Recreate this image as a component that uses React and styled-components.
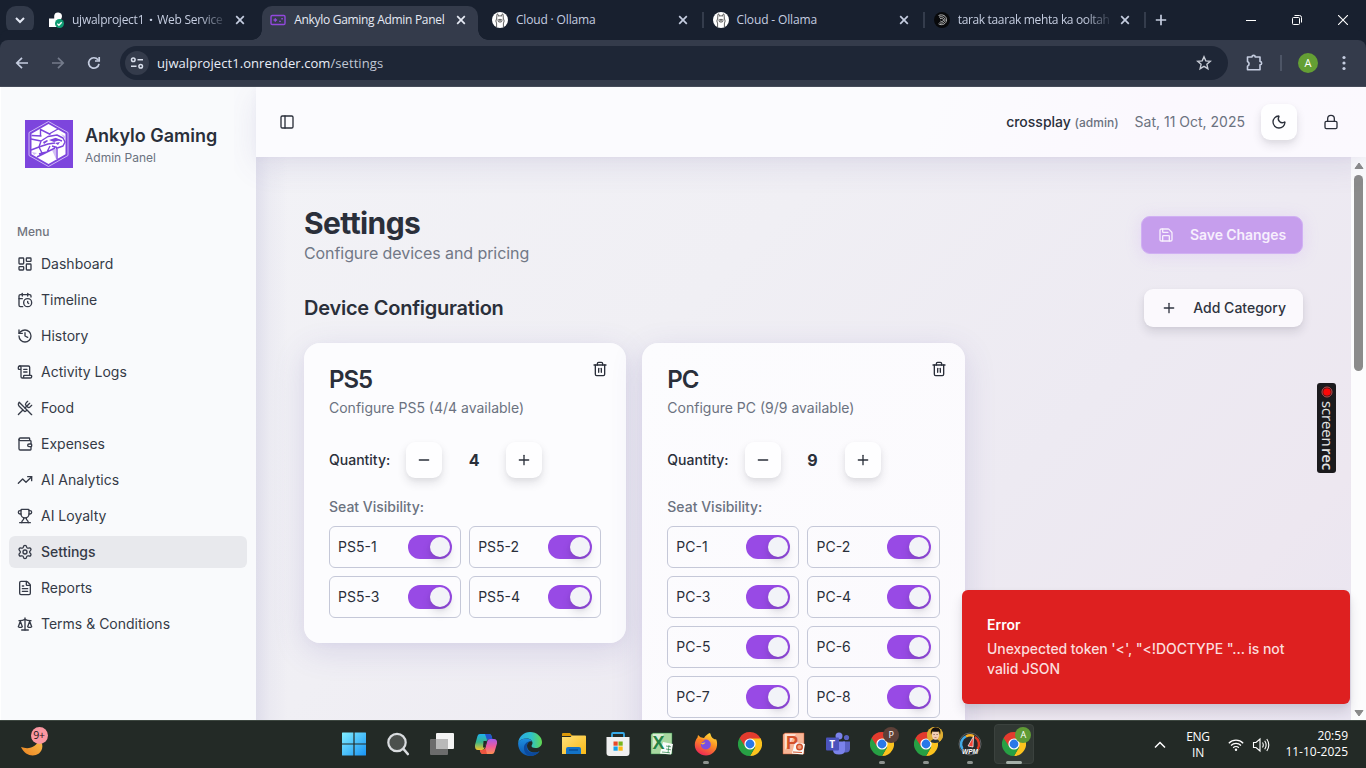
import React from "react";
import styled, { createGlobalStyle, css } from "styled-components";
import {
  PanelLeft, Moon, Lock, LayoutDashboard, CalendarClock, History, ScrollText,
  UtensilsCrossed, Wallet, TrendingUp, Trophy, Settings, FileText, Scale, Save,
  Plus, Minus, Trash2,
} from "lucide-react";

const Global = createGlobalStyle`
  *, *::before, *::after { box-sizing: border-box; }
  body { margin: 0; overflow: hidden; font-family: Inter, sans-serif; color: #2a2f3a; }
  h1, h2, h3, p { margin: 0; }
  button { font: inherit; color: inherit; border: 0; padding: 0; background: none; }
  svg { display: block; flex: none; }
`;

const ui = css`font-family: "Open Sans", "Noto Sans", sans-serif;`;

const Screen = styled.div`
  width: 1366px; height: 768px; display: flex; flex-direction: column;
  position: relative; overflow: hidden;
`;

/* ---------- browser frame ---------- */
const TabStrip = styled.div`
  ${ui} height: 40px; flex: none; display: flex; background: #18202f; color: #c5cde0; font-size: 12px;
`;
const TabSearch = styled.div`
  width: 28px; height: 28px; margin: 6px 6px 0; border-radius: 10px; background: #323a4a;
  display: flex; align-items: center; justify-content: center;
`;
const Tab = styled.div`
  width: 221.2px; height: 40px; flex: none; display: flex; align-items: center; gap: 8px;
  padding: 0 13px 0 ${p => p.$pad || 9}px; position: relative; isolation: isolate; color: ${p => (p.$active ? "#e6eaf4" : "#c5cde0")};
  ${p => p.$active && css`
    &::before { content: ""; position: absolute; z-index: -1; left: 1px; right: 4px; top: 6px; bottom: 0;
      background: #343b4b; border-radius: 10px 10px 0 0; }
    &::after { content: ""; position: absolute; z-index: -1; left: -9px; right: -6px; bottom: 0; height: 10px;
      background:
        radial-gradient(circle at 0 0, transparent 9.5px, #343b4b 10px) left / 10px 10px no-repeat,
        radial-gradient(circle at 100% 0, transparent 9.5px, #343b4b 10px) right / 10px 10px no-repeat; }
  `}
`;
const TabTitle = styled.div`
  flex: 1; min-width: 0; white-space: nowrap; letter-spacing: ${p => p.$ls || "-0.15px"}; line-height: 18px;
  ${p => p.$fade && css`mask-image: linear-gradient(90deg, #000 84%, rgba(0, 0, 0, 0.15) 100%);`}
`;
const TabDot = styled.span`font-weight: 800; padding: 0 2px;`;
const TabLine = styled.div`
  position: absolute; right: 0; top: 12px; width: 2px; height: 16px; background: #343c4c;
`;
const NewTab = styled.div`width: 30px; display: flex; align-items: center; justify-content: center;`;
const WindowButtons = styled.div`margin-left: auto; display: flex;`;
const WindowButton = styled.div`width: 46px; height: 40px; display: flex; align-items: center; justify-content: center;`;

const Toolbar = styled.div`
  ${ui} height: 47px; flex: none; background: #343b4b; border-radius: 8px 8px 0 0; border-bottom: 1px solid #454b59;
  display: flex; align-items: center; padding: 0 4px;
  box-shadow: 0 -10px 0 0 #18202f;
`;
const ToolSlot = styled.div`
  width: ${p => p.$w || 36}px; height: 36px; flex: none; display: flex; align-items: center; justify-content: center;
`;
const Omnibox = styled.div`
  width: 1108px; height: 34px; flex: none; margin-left: 8px; border-radius: 17px; background: #1e2636;
  display: flex; align-items: center; padding: 0 12px 0 5px; color: #e9edf6;
  font-size: 13px; letter-spacing: 0.07px;
`;
const SiteInfo = styled.div`
  width: 24px; height: 24px; border-radius: 12px; background: #343b4b; margin-right: 8px;
  display: flex; align-items: center; justify-content: center;
`;
const UrlText = styled.div`flex: 1; white-space: nowrap;`;
const UrlPath = styled.span`color: #c0c6d4;`;
const ToolLine = styled.div`width: 2px; height: 16px; flex: none; background: #4d5566;`;
const Avatar = styled.div`
  ${ui} width: 20px; height: 20px; border-radius: 50%; background: #649f34; color: #fff; font-size: 11px; line-height: 20px;
  text-align: center;
`;

/* ---------- page ---------- */
const Page = styled.div`height: 633px; flex: none; display: flex; background: #f1f0f5; overflow: hidden; line-height: 20px;`;
const Sidebar = styled.aside`
  width: 256px; flex: none; background: #f9fafc; border-left: 1px solid #fff; padding: 8px 9px 0 8px;
  display: flex; flex-direction: column;
`;
const Brand = styled.div`display: flex; align-items: center; gap: 12px; padding: 25px 16px 0;`;
const BrandName = styled.div`font-size: 18px; line-height: 28px; font-weight: 600; color: #2a2f3a; white-space: nowrap;`;
const BrandSub = styled.div`font-size: 12px; line-height: 16px; color: #6b7280;`;
const MenuLabel = styled.div`
  margin-top: 47px; height: 32px; padding: 1px 8px 0; display: flex; align-items: center;
  font-size: 12px; line-height: 17px; font-weight: 500; color: #71747e;
`;
const Menu = styled.nav`display: flex; flex-direction: column; gap: 4px; margin-top: 1px;`;
const MenuItem = styled.div`
  height: 32px; border-radius: 6px; padding: 0 8px; display: flex; align-items: center; gap: 8px;
  font-size: 14px; color: #353a47; font-weight: ${p => (p.$active ? 500 : 400)};
  background: ${p => (p.$active ? "#e8e9ed" : "transparent")};
`;

const Main = styled.div`flex: 1; min-width: 0; display: flex; flex-direction: column;`;
const Header = styled.header`
  height: 70px; flex: none; display: flex; align-items: center; padding: 0 17px; gap: 16px; position: relative;
  background: linear-gradient(115deg, #fbfbfe 0%, #fbfbfe 60%, #fbf8fe 80%, #fbf9fe 100%);
  box-shadow: 0 8px 32px rgba(90, 80, 160, 0.12), 0 2px 8px rgba(90, 80, 160, 0.04);
  clip-path: inset(0 0 -60px -22px);
`;
const PanelButton = styled.button`width: 28px; height: 28px; display: grid; place-items: center; margin-right: auto;`;
const UserName = styled.div`font-size: 14px; font-weight: 500; color: #2a2f3a;`;
const UserRole = styled.span`font-size: 12px; color: #6b7280;`;
const DateText = styled.div`font-size: 14px; color: #6b7280;`;
const IconButton = styled.button`
  width: 36px; height: 36px; flex: none; border-radius: 9px; display: grid; place-items: center; color: #2a2f3a;
  ${p => p.$raised && css`background: #fefeff; box-shadow: 0 5px 10px rgba(40, 40, 60, 0.12), 0 2px 4px rgba(40, 40, 60, 0.04);`}
`;
const Body = styled.div`flex: 1; min-height: 0; display: flex;`;
const Content = styled.main`
  width: 1095px; height: 563px; overflow: hidden; padding: 48px; flex: none;
  background:
    linear-gradient(90deg, rgba(190, 188, 216, 0.34) 0, rgba(200, 198, 222, 0.14) 14px, transparent 32px),
    linear-gradient(135deg, #f2f2f6 0%, #f0eff4 35%, #edeaf2 65%, #ede7f0 85%, #e9e5f1 100%);
`;
const Row = styled.div`display: flex; align-items: center; justify-content: space-between;`;
const Title = styled.h1`font-size: 30px; line-height: 36px; font-weight: 700; letter-spacing: -0.6px;`;
const Subtitle = styled.p`font-size: 16px; line-height: 24px; color: #717886; letter-spacing: -0.08px;`;
const SectionRow = styled(Row)`margin-top: 24px;`;
const SectionTitle = styled.h2`font-size: 20px; line-height: 28px; font-weight: 600; letter-spacing: -0.24px;`;
const SaveButton = styled.button`
  height: 38px; padding: 0 16px; border: 1px solid #d0b0f3; border-radius: 9px; background: #c69eed; color: #f7effd;
  display: flex; align-items: center; gap: 16px; font-size: 14px; font-weight: 600; letter-spacing: -0.08px;
  box-shadow: 0 2px 16px rgba(190, 140, 245, 0.22); white-space: nowrap;
`;
const AddButton = styled.button`
  height: 38px; padding: 0 17px; border-radius: 9px; background: #fbf9fd; color: #2f3440;
  display: flex; align-items: center; gap: 16px; font-size: 14px; font-weight: 500;
  box-shadow: 0 5px 10px rgba(40, 40, 60, 0.13), 0 1px 3px rgba(40, 40, 60, 0.04); white-space: nowrap;
`;
const Cards = styled.div`display: grid; grid-template-columns: repeat(3, 1fr); gap: 16px; align-items: start; margin-top: 16px;`;
const Card = styled.section`
  border-radius: 16px; padding: 25px;
  background: linear-gradient(135deg, #fcfcfe 0%, ${p => p.$tint || "#fcfcfe"} 100%);
  box-shadow: 0 8px 32px rgba(80, 70, 160, 0.15), 0 2px 8px rgba(80, 70, 160, 0.03);
`;
const CardHeader = styled.div`display: flex; justify-content: space-between; height: 74px;`;
const DeleteButton = styled(IconButton)`margin: -17px -17px 0 0;`;
const CardTitle = styled.h3`font-size: 24px; line-height: 24px; font-weight: 600; letter-spacing: -1px;`;
const CardText = styled.p`font-size: 14px; line-height: 20px; color: #6b7280; margin-top: 6px; white-space: nowrap;`;
const Quantity = styled.div`display: flex; align-items: center; gap: 16px; font-size: 14px; font-weight: 500; height: 36px;`;
const QuantityValue = styled.div`width: 32px; text-align: center; font-size: 16px; font-weight: 700;`;
const SeatLabel = styled.div`margin-top: 16px; height: 24px; line-height: 26px; font-size: 14px; font-weight: 500; color: #6b7280;`;
const Seats = styled.div`display: grid; grid-template-columns: 1fr 1fr; gap: 8px; margin-top: 8px;`;
const Seat = styled.div`
  height: 42px; border: 1px solid #c5c8d8; border-radius: 6px; padding: 0 8px;
  display: flex; align-items: center; justify-content: space-between; font-size: 14px; color: #2a2f3a;
`;
const Switch = styled.div`
  width: 44px; height: 24px; border-radius: 12px; background: #984ae5; padding: 2px; display: flex; justify-content: flex-end;
`;
const Thumb = styled.div`
  width: 20px; height: 20px; border-radius: 50%; background: #f2f3f8;
  box-shadow: 0 6px 10px rgba(40, 40, 60, 0.13), 0 2px 4px rgba(40, 40, 60, 0.1);
`;
const Scrollbar = styled.div`
  width: 15px; height: 563px; background: #fcfcfd; display: flex; flex-direction: column; align-items: center; padding: 4px 0 2px;
`;
const ScrollThumb = styled.div`width: 9px; height: 196px; border-radius: 5px; background: #8b8b8b; margin: 4px 0 auto;`;

const Recorder = styled.div`
  position: absolute; left: 1317px; top: 383px; width: 19px; height: 90px; border-radius: 3px; background: #1b1a1d;
  display: flex; flex-direction: column; align-items: center; padding-top: 3px; color: #e5e5e5; z-index: 3;
`;
const RecorderText = styled.div`
  writing-mode: vertical-rl; font: 500 15px/19px "Open Sans", sans-serif; margin: 3px 0 0 2px; letter-spacing: -0.15px; white-space: nowrap;
`;
const RecorderStrong = styled.span`font-weight: 600; margin-top: 1px;`;
const Toast = styled.div`
  position: absolute; left: 962px; top: 590px; width: 388px; height: 114px; border-radius: 6px; background: #de2020; padding: 25px;
  box-shadow: 0 8px 12px rgba(40, 30, 60, 0.13), 0 2px 5px rgba(40, 30, 60, 0.06); z-index: 4; color: #fff;
  font-size: 14px; line-height: 20px;
`;
const ToastTitle = styled.div`font-weight: 600; margin-bottom: 4px;`;
const ToastText = styled.div`font-weight: 500; color: #fbdcdc; width: 310px; letter-spacing: -0.08px;`;

/* ---------- taskbar ---------- */
const Taskbar = styled.div`
  ${ui} height: 48px; flex: none; display: flex; background: #232a26; border-top: 1px solid #3d4740; color: #fff;
  position: relative; z-index: 5; padding-left: 13px;
`;
const Weather = styled.div`width: 318.6px; height: 47px; position: relative; padding: 13px 0 0 6px;`;
const WeatherBadge = styled.div`
  position: absolute; left: 17.5px; top: 6px; width: 17px; height: 17px; border-radius: 50%; background: #fa97a1; color: #221416;
  font-size: 10.5px; line-height: 17px; text-align: center; letter-spacing: -0.2px;
`;
const Apps = styled.div`display: flex;`;
const AppSlot = styled.div`
  width: 44.06px; height: 47px; padding-bottom: 1px; display: flex; align-items: center; justify-content: center;
  position: relative; isolation: isolate;
  ${p => p.$active && css`&::before { content: ""; position: absolute; z-index: -1; left: 2px; top: 3px; width: 40px; height: 40px;
    border-radius: 4px; background: #313834; border: 1px solid #3b423e; }`}
  ${p => p.$run && css`&::after { content: ""; position: absolute; bottom: 4px; left: ${p.$active ? 14 : 19}px;
    width: ${p.$active ? 16 : 6}px; height: 3px; border-radius: 2px; background: ${p.$active ? "#a5b0aa" : "#8d928f"}; }`}
`;
const ProfileBadge = styled.div`
  position: absolute; left: 23px; top: 6px; width: 16px; height: 16px; border-radius: 50%; background: ${p => p.$bg};
  font-size: 9px; line-height: 16px; text-align: center; color: #fff; overflow: hidden;
`;
const Tray = styled.div`margin-left: auto; display: flex; align-items: center; font-size: 12px; line-height: 16px; letter-spacing: -0.25px;`;
const TrayCell = styled.div`display: flex; justify-content: center; width: ${p => p.$w}px; text-align: center;`;
const Clock = styled.div`width: 74px; text-align: right; margin: 0 18px 0 6px; white-space: nowrap; padding-bottom: 1px; letter-spacing: 0;`;

const CloseX = () => (
  <svg width="16" height="16" viewBox="0 0 16 16" stroke="currentColor" strokeWidth="1.7"><path d="M4.2 4.2l7.6 7.6M11.8 4.2l-7.6 7.6" /></svg>
);
const RenderIcon = () => (
  <svg width="16" height="16" viewBox="0 0 16 16">
    <path d="M1 6.5h5.2V3.8A3.9 3.9 0 1 1 10 8.2V15H1z" fill="#fff" />
    <circle cx="11.5" cy="11.5" r="4.5" fill="#0f9b72" />
    <path d="M9.3 11.6l1.6 1.6 2.8-3" fill="none" stroke="#fff" strokeWidth="1.3" />
  </svg>
);
const PadIcon = () => (
  <svg width="16" height="16" viewBox="0 0 16 16" fill="none" stroke="#9249dc" strokeWidth="1.4">
    <rect x="1" y="3.5" width="14" height="9" rx="1.2" /><path d="M3.5 8h3.6M5.3 6.2v3.6M9.2 9.4h1.6M11.3 6.8h1.6" />
  </svg>
);
const LlamaIcon = () => (
  <svg width="16" height="16" viewBox="0 0 16 16" fill="none" stroke="#333" strokeWidth=".8">
    <circle cx="8" cy="8" r="8" fill="#fff" stroke="none" />
    <path d="M4.6 15V11c-.9-1.2-.9-2.8 0-4L5 2.200c.9-.5 1.5.6 1.6 2 .8-.5 2-.5 2.800 0 .1-1.400.7-2.500 1.600-2l.4 4.800c.9 1.200.9 2.800 0 4v4" />
    <ellipse cx="8" cy="8.700" rx="2" ry="1.400" /><path d="M7.400 8.400h1.200M8 8.500v.8M5.600 7.300h.5M9.900 7.300h.5" />
  </svg>
);
const SpiralIcon = () => (
  <svg width="16" height="16" viewBox="0 0 16 16" fill="none" stroke="#b5b5b5" strokeWidth="1">
    <circle cx="8" cy="8" r="8" fill="#08090b" stroke="none" />
    <path d="M4.500 3.500c4-1.800 8 .5 8 4.300 0 4-4.500 6.200-8 4M5 5.200c3-1.300 6 .2 6 2.700s-3 4-5.500 2.800M6 6.700c2-.6 3.500 0 3.500 1.400S7.500 10 6.300 9" />
  </svg>
);

const BrandLogo = () => (
  <svg width="48" height="48" viewBox="0 0 48 48">
    <rect width="48" height="48" fill="#7d45dd" />
    <path d="M23.500 1.500l19.500 11v23l-19.500 11-19.500-11v-23z" fill="none" stroke="#cdb6f5" strokeWidth="1" />
    <path d="M23.500 4l17 9.800v20.400l-17 9.800-17-9.800V13.800z" fill="#fff" />
    <g fill="none" stroke="#7d45dd" strokeWidth="1.400" strokeLinejoin="round">
      <path d="M15.500 8.500v7.500M6.500 15.500l10 .5M15.500 9.500l10 5M24 14l9-5" />
      <path d="M6 19l10 2 7-4.500 9-1.500 6 3 2 4-2 4-7 2.500M16 21l-2 6M30 18.500l7 2.500" />
      <path d="M6 30l8-3 9-3 7-1M14 27l3 6 5-1 3-6M17 33l-3 1M27 26l5 1.500M12 37l18-9M32 29v10" />
    </g>
    <path d="M24 20l6-2 5 2-6 2zM18 22l4-2 1 1-4 3zM30 23l5-1-2 3z" fill="#7d45dd" />
    <path d="M27 30l4-1.500V39zM7 32l5 1-3 2zM36 14l4 2v3z" fill="#7d45dd" opacity=".35" />
  </svg>
);

const ChromeLogo = () => (
  <svg width="24" height="24" viewBox="0 0 24 24">
    <path d="M12 12L22.400 6A12 12 0 0 1 12 24l5.200-9z" fill="#fcc31e" />
    <path d="M12 12L17.200 15 12 24A12 12 0 0 1 1.600 6z" fill="#27a044" />
    <path d="M12 6h10.400L20 12h-4z" fill="#fcc31e" />
    <path d="M1.600 6L6.800 15l5.200-3V6z" fill="#27a044" />
    <path d="M12 6.500h10.600A12 12 0 0 0 1.600 6l5.200 8z" fill="#e33b2e" />
    <circle cx="12" cy="12" r="5.600" fill="#fff" /><circle cx="12" cy="12" r="4.400" fill="#2878e8" />
  </svg>
);
const StartLogo = () => (
  <svg width="24" height="24" viewBox="0 0 24 24">
    <defs><linearGradient id="win" gradientUnits="userSpaceOnUse" x1="0" y1="0" x2="24" y2="24"><stop stopColor="#82efff" /><stop offset="1" stopColor="#1792f4" /></linearGradient></defs>
    <path d="M0 1q0-.500.500-.500H11.400V11.400H0zM12.600.500h10.900q.500 0 .5.500V11.400H12.600zM0 12.600h11.400v11H.500q-.500 0-.500-.500zM12.600 12.600H24v10.500q0 .500-.500.500H12.600z" fill="url(#win)" />
  </svg>
);
const SearchLogo = () => (
  <svg width="26" height="26" viewBox="0 0 26 26" fill="none">
    <circle cx="12" cy="11.500" r="8.700" fill="#4b504d" stroke="#d9dcdf" strokeWidth="2.200" /><path d="M18.500 18l4.300 5" stroke="#d9dcdf" strokeWidth="2.600" strokeLinecap="round" />
  </svg>
);
const TaskViewLogo = () => (
  <svg width="24" height="24" viewBox="0 0 24 24"><rect x="6" y="1" width="18" height="16" rx="1" fill="#f3f3f3" /><rect x="0" y="7" width="18" height="16" rx="1" fill="#6c6c6c" /><path d="M6 7h12v10H6z" fill="#b9b9b9" /></svg>
);
const CopilotLogo = () => (
  <svg width="24" height="24" viewBox="0 0 24 24">
    <defs>
      <linearGradient id="cp1" x2="0" y2="1"><stop stopColor="#1fb1ee" /><stop offset=".5" stopColor="#37b58a" /><stop offset="1" stopColor="#f4c52c" /></linearGradient>
      <linearGradient id="cp2" x2="0" y2="1"><stop stopColor="#a55be8" /><stop offset=".5" stopColor="#ee5b9b" /><stop offset="1" stopColor="#fd8f51" /></linearGradient>
    </defs>
    <path d="M6 2h9q2 0 2.600 2l.6 3h-3q-2 0-2.600 2L10.500 16q-.500 2-2.500 2H4Q.500 18 1 13L3.500 4Q4 2 6 2z" fill="url(#cp1)" />
    <path d="M11 2h4q2 0 2.600 2l.9 3h-3.500q-1.500 0-2 1z" fill="#2453cc" />
    <path d="M18 22H9q-2 0-2.600-2l-.6-2h3q2 0 2.600-2L13.500 8.500Q14 7 16 7h4q3.500 0 3 4.500L20.500 20q-.500 2-2.500 2z" fill="url(#cp2)" />
    <path d="M9.500 9h3.300l-2 6.500H9z" fill="#232a26" />
    <path d="M5.800 18h3q2 0 2.600-2l1.600 6H9q-2 0-2.600-2z" fill="#ed553f" />
  </svg>
);
const EdgeLogo = () => (
  <svg width="24" height="24" viewBox="0 0 24 24">
    <defs>
      <linearGradient id="ed1"><stop stopColor="#28a8e8" /><stop offset=".55" stopColor="#2fc2c8" /><stop offset="1" stopColor="#62d84e" /></linearGradient>
      <linearGradient id="ed2" x2="0" y2="1"><stop stopColor="#1d8fe0" /><stop offset="1" stopColor="#0d55ad" /></linearGradient>
    </defs>
    <path d="M.2 10.500C1 4.500 6 0 12 0c7 0 12 5 12 10 0 4-3 6-6.500 6-2.500 0-4-1-4-2 0-.8 1-1.200 1-3 0-2.500-2.500-4.500-6-4.500S1.500 8 .2 10.500z" fill="url(#ed1)" />
    <path d="M.2 10.500C1.500 8 5 6.500 8.500 6.500c3 0 5 1.500 5.800 3-2.500-1-5.300.700-5.300 4.200 0 4 3.500 6.800 7.500 6.800 2 0 3.700-.6 5-1.300C19.500 22 16 24 12 24 5 24-.5 18 .2 10.500z" fill="url(#ed2)" />
    <path d="M9 13.500C8 18 11 21 16.500 20.500c2 0 3.700-.6 5-1.300-2 2.800-5.500 4.800-9.500 4.800C8 23 5.500 19 6 15c.3-3 3.500-6 7-5.700-2.500.2-4 2-4 4.200z" fill="#0c4a9d" />
  </svg>
);
const FolderLogo = () => (
  <svg width="24" height="24" viewBox="0 0 24 24">
    <defs><linearGradient id="fo" x2="1" y2="1"><stop stopColor="#ffe07a" /><stop offset="1" stopColor="#f9b916" /></linearGradient></defs>
    <path d="M0 2q0-1 1-1h7l2.500 3H0z" fill="#dc9808" /><path d="M0 5h8.500L10 3.500h13q1 0 1 1V22H0z" fill="url(#fo)" />
    <path d="M4 22v-5q0-2 2-2h11q2 0 2 2v5z" fill="#1373c8" /><path d="M7 18h9" stroke="#0a4f9b" strokeWidth="1.500" />
  </svg>
);
const StoreLogo = () => (
  <svg width="24" height="24" viewBox="0 0 24 24">
    <path d="M6 6V2q0-1 1-1h10q1 0 1 1v4" fill="none" stroke="#37aae8" strokeWidth="1.800" />
    <path d="M.5 5h23v16q0 3-3 3h-17q-3 0-3-3z" fill="#f0f0f0" />
    <path fill="#e8492a" d="M7.500 9.500h4.200v4.200H7.500z" /><path fill="#78b51a" d="M12.500 9.500h4.200v4.200h-4.200z" /><path fill="#159fe8" d="M7.500 14.500h4.200v4.200H7.500z" /><path fill="#fdb714" d="M12.500 14.500h4.200v4.200h-4.200z" />
  </svg>
);
const OfficeLogo = ({ color, light, letter, chart }) => (
  <svg width="24" height="24" viewBox="0 0 24 24">
    <path d="M1 2.500L3 1h19v21H1z" fill={light} stroke={color} strokeOpacity=".6" strokeWidth=".8" />
    <path d="M3 2l11 0-11 16z" fill="#fff" opacity=".55" />
    <path d="M13 10l10 2-2 10.500-11-1z" fill="#f9fbf9" />
    {chart ? <><circle cx="17.500" cy="15" r="2.800" fill="#f0a27f" stroke={color} strokeWidth="1.400" /><path d="M11 20l9 .5" stroke={color} /></>
      : <path d="M16 14l5 .8M16 17l5 .8M12 20l8 .8M19 13l-1 8" stroke={color} strokeWidth=".7" />}
    <text x={chart ? 4 : 2.500} y="16.500" fontFamily="Liberation Sans, sans-serif" fontWeight="bold" fontSize="18" fill={color}>{letter}</text>
  </svg>
);
const FirefoxLogo = () => (
  <svg width="24" height="24" viewBox="0 0 24 24">
    <defs><linearGradient id="ff" x1=".8" x2=".3" y2="1"><stop stopColor="#ffe43c" /><stop offset=".45" stopColor="#fd8e22" /><stop offset="1" stopColor="#ee2457" /></linearGradient></defs>
    <path d="M16 1c1 2 .8 3 2.500 5 1.500 1 3 2 3.500 1 1 2 1.300 4 1 6.500C22.500 19 17.800 23.500 12 23.500S.8 19 .8 13c0-3 1-5.500 2.700-7.500L4 3l2.500 2.300L10 6c1.500-2.500 3.500-4 6-5z" fill="url(#ff)" />
    <circle cx="11.800" cy="12.500" r="5" fill="#7a4ee0" /><path d="M3 8c3-2 6-1 8 1-2 0-3 1-4.500 3C7 9.800 4.500 9 3 8z" fill="#fd7c22" /><path d="M6.500 11.500l5-1.300q-.8 2-2.800 2.300z" fill="#ffc12e" />
  </svg>
);
const TeamsLogo = () => (
  <svg width="24" height="24" viewBox="0 0 24 24">
    <circle cx="20.500" cy="5.500" r="2.600" fill="#5a62c3" /><path d="M17 9.500h7v7q0 4-4 4h-3z" fill="#5a62c3" />
    <circle cx="13" cy="4" r="3.500" fill="#7b83eb" /><path d="M7 9.500h12v8.500q0 4.500-6 4.500t-6-4.500z" fill="#7b83eb" />
    <rect x="0" y="5.500" width="13" height="13" rx="1" fill="#4b53bc" />
    <text x="3.300" y="15.500" fontFamily="Open Sans, sans-serif" fontWeight="bold" fontSize="10" fill="#fff">T</text>
  </svg>
);
const WpmLogo = () => (
  <svg width="24" height="24" viewBox="0 0 24 24">
    <circle cx="12" cy="12" r="11" fill="#26292b" stroke="#5d5f61" strokeWidth="1" />
    <path d="M4.500 17A8.500 8.500 0 0 1 8 4.500" fill="none" stroke="#42a9e6" strokeWidth="2.400" /><path d="M8 4.500a8.500 8.500 0 0 1 8-.2" fill="none" stroke="#f6b029" strokeWidth="2.400" /><path d="M17 5a8.500 8.500 0 0 1 2.500 12" fill="none" stroke="#e23b24" strokeWidth="2.400" />
    <path d="M10 14L15.500 4.500l-.5 10.500z" fill="#f34336" stroke="#fff" strokeWidth=".7" />
    <text x="4" y="21.500" fontFamily="Liberation Sans, sans-serif" fontWeight="bold" fontStyle="italic" fontSize="7" textLength="16" lengthAdjust="spacingAndGlyphs" fill="#fff">WPM</text>
  </svg>
);
const FaceLogo = () => (
  <svg width="16" height="16" viewBox="0 0 16 16">
    <rect width="16" height="16" fill="#dfae32" /><path d="M3 16q1-4 5-4t5 4z" fill="#273337" /><ellipse cx="8.500" cy="8" rx="3.600" ry="4.800" fill="#f1cdb5" /><path d="M4 8C3 2 6 .2 9 .2s5.500 2 4 7.800L12 4.500Q8.500 5 5.200 4.500z" fill="#16110f" /><path d="M6.500 7.500h1.200M9.500 7.500h1.200" stroke="#512e25" strokeWidth=".7" /><path d="M7.500 10.500h2" stroke="#b0604e" strokeWidth=".7" />
  </svg>
);

const tabs = [
  { title: <>ujwalproject1 <TabDot>·</TabDot> Web Service</>, icon: <RenderIcon />, fade: true, pad: 8, ls: "-0.25px" },
  { title: "Ankylo Gaming Admin Panel", icon: <PadIcon />, active: true, ls: "-0.3px" },
  { title: "Cloud · Ollama", icon: <LlamaIcon />, line: true, pad: 9.5 },
  { title: "Cloud - Ollama", icon: <LlamaIcon />, line: true },
  { title: "tarak taarak mehta ka ooltah", icon: <SpiralIcon />, line: true, fade: true, ls: "-0.35px" },
];
const menu = [
  ["Dashboard", LayoutDashboard], ["Timeline", CalendarClock], ["History", History], ["Activity Logs", ScrollText],
  ["Food", UtensilsCrossed], ["Expenses", Wallet], ["AI Analytics", TrendingUp], ["AI Loyalty", Trophy],
  ["Settings", Settings], ["Reports", FileText], ["Terms & Conditions", Scale],
];
const apps = [
  { icon: <StartLogo /> }, { icon: <SearchLogo /> }, { icon: <TaskViewLogo /> }, { icon: <CopilotLogo /> }, { icon: <EdgeLogo /> },
  { icon: <FolderLogo /> }, { icon: <StoreLogo /> },
  { icon: <OfficeLogo color="#258346" light="#a9d8a0" letter="X" /> },
  { icon: <FirefoxLogo />, run: true }, { icon: <ChromeLogo /> },
  { icon: <OfficeLogo color="#d3502a" light="#f8b697" letter="P" chart /> },
  { icon: <TeamsLogo /> },
  { icon: <ChromeLogo />, run: true, badge: <ProfileBadge $bg="#5d4038">P</ProfileBadge> },
  { icon: <ChromeLogo />, run: true, badge: <ProfileBadge $bg="#dfae32"><FaceLogo /></ProfileBadge> },
  { icon: <WpmLogo />, run: true },
  { icon: <ChromeLogo />, run: true, active: true, badge: <ProfileBadge $bg="#5f9b35">A</ProfileBadge> },
];

function DeviceCard({ name, count, tint }) {
  return (
    <Card $tint={tint}>
      <CardHeader>
        <div>
          <CardTitle>{name}</CardTitle>
          <CardText>Configure {name} ({count}/{count} available)</CardText>
        </div>
        <DeleteButton><Trash2 size={16} /></DeleteButton>
      </CardHeader>
      <Quantity>
        Quantity:
        <IconButton $raised><Minus size={16} /></IconButton>
        <QuantityValue>{count}</QuantityValue>
        <IconButton $raised><Plus size={16} /></IconButton>
      </Quantity>
      <SeatLabel>Seat Visibility:</SeatLabel>
      <Seats>
        {Array.from({ length: count }, (_, i) => (
          <Seat key={i}>{name}-{i + 1}<Switch><Thumb /></Switch></Seat>
        ))}
      </Seats>
    </Card>
  );
}

export default function App() {
  return (
    <Screen>
      <Global />
      <TabStrip>
        <TabSearch>
          <svg width="12" height="12" viewBox="0 0 12 12" fill="none" stroke="#e3e8f4" strokeWidth="2"><path d="M2 4l4 4 4-4" /></svg>
        </TabSearch>
        {tabs.map((t, i) => (
          <Tab key={i} $active={t.active} $pad={t.pad}>
            {t.icon}
            <TabTitle $fade={t.fade} $ls={t.ls}>{t.title}</TabTitle>
            <CloseX />
            {t.line && <TabLine />}
          </Tab>
        ))}
        <NewTab><svg width="12" height="12" viewBox="0 0 12 12" stroke="#c5cde0" strokeWidth="1.700"><path d="M6 .8v10.400M.8 6h10.400" /></svg></NewTab>
        <WindowButtons>
          <WindowButton><svg width="10" height="10" viewBox="0 0 10 10" stroke="#fff"><path d="M0 5.500h10" /></svg></WindowButton>
          <WindowButton><svg width="10" height="10" viewBox="0 0 10 10" fill="none" stroke="#fff"><rect x=".5" y="2.500" width="7" height="7" rx="1" /><path d="M2.500.5h5q2 0 2 2v5" /></svg></WindowButton>
          <WindowButton><svg width="10" height="10" viewBox="0 0 10 10" stroke="#fff" strokeWidth="1.100"><path d="M0 0l10 10M10 0L0 10" /></svg></WindowButton>
        </WindowButtons>
      </TabStrip>
      <Toolbar>
        <ToolSlot><svg width="14" height="14" viewBox="0 0 14 14" fill="none" stroke="#c5cde0" strokeWidth="1.700"><path d="M13 7H2M7 1.800L1.800 7 7 12.200" /></svg></ToolSlot>
        <ToolSlot><svg width="14" height="14" viewBox="0 0 14 14" fill="none" stroke="#747b8b" strokeWidth="1.700"><path d="M1 7h11M7 1.800L12.200 7 7 12.200" /></svg></ToolSlot>
        <ToolSlot><svg width="14" height="14" viewBox="0 0 14 14" fill="none" stroke="#c5cde0" strokeWidth="1.700"><path d="M12 7.800A5.200 5.200 0 1 1 11 3.800M12.200 1v4H8" /></svg></ToolSlot>
        <Omnibox>
          <SiteInfo>
            <svg width="14" height="14" viewBox="0 0 14 14" fill="none" stroke="#d9dfec" strokeWidth="1.500"><circle cx="3.300" cy="3.700" r="1.800" /><path d="M7.500 3.700H13M1 10.300h5.500" /><circle cx="10.700" cy="10.300" r="1.800" /></svg>
          </SiteInfo>
          <UrlText>ujwalproject1.onrender.com<UrlPath>/settings</UrlPath></UrlText>
          <ToolSlot $w={24}><svg width="16" height="16" viewBox="0 0 16 16" fill="none" stroke="#c8ccd6" strokeWidth="1.400"><path d="M8 1.800l1.800 4.100 4.500.4-3.400 3 1 4.400L8 11.400l-3.900 2.300 1-4.400-3.400-3 4.500-.4z" /></svg></ToolSlot>
        </Omnibox>
        <ToolSlot $w={52}><svg width="18" height="18" viewBox="0 0 18 18" fill="none" stroke="#c5cde0" strokeWidth="1.600"><path d="M2.500 3H7a1.600 1.600 0 0 1 3.200 0H15v4.500a1.600 1.600 0 0 1 0 3.300v5H2.500v-3.600a2.600 2.600 0 0 0 0-4.800z" strokeLinejoin="round" /></svg></ToolSlot>
        <ToolLine />
        <ToolSlot $w={52}><Avatar>A</Avatar></ToolSlot>
        <ToolSlot $w={20}><svg width="4" height="16" viewBox="0 0 4 16" fill="#c5cde0"><circle cx="2" cy="2.500" r="1.600" /><circle cx="2" cy="8" r="1.600" /><circle cx="2" cy="13.500" r="1.600" /></svg></ToolSlot>
      </Toolbar>

      <Page>
        <Sidebar>
          <Brand>
            <BrandLogo />
            <div><BrandName>Ankylo Gaming</BrandName><BrandSub>Admin Panel</BrandSub></div>
          </Brand>
          <MenuLabel>Menu</MenuLabel>
          <Menu>
            {menu.map(([label, Icon]) => (
              <MenuItem key={label} $active={label === "Settings"}><Icon size={16} />{label}</MenuItem>
            ))}
          </Menu>
        </Sidebar>
        <Main>
          <Header>
            <PanelButton><PanelLeft size={16} /></PanelButton>
            <UserName>crossplay <UserRole>(admin)</UserRole></UserName>
            <DateText>Sat, 11 Oct, 2025</DateText>
            <IconButton $raised><Moon size={16} /></IconButton>
            <IconButton><Lock size={16} /></IconButton>
          </Header>
          <Body>
            <Content>
              <Row>
                <div><Title>Settings</Title><Subtitle>Configure devices and pricing</Subtitle></div>
                <SaveButton><Save size={16} />Save Changes</SaveButton>
              </Row>
              <SectionRow>
                <SectionTitle>Device Configuration</SectionTitle>
                <AddButton><Plus size={16} />Add Category</AddButton>
              </SectionRow>
              <Cards>
                <DeviceCard name="PS5" count={4} />
                <DeviceCard name="PC" count={9} tint="#fbf9fd" />
              </Cards>
            </Content>
            <Scrollbar>
              <svg width="10" height="10" viewBox="0 0 10 10"><path d="M5 2L9 7.500H1z" fill="#8b8b8b" stroke="#8b8b8b" strokeLinejoin="round" /></svg>
              <ScrollThumb />
              <svg width="10" height="10" viewBox="0 0 10 10"><path d="M5 8L1 2.500h8z" fill="#8b8b8b" stroke="#8b8b8b" strokeLinejoin="round" /></svg>
            </Scrollbar>
          </Body>
        </Main>
      </Page>

      <Taskbar>
        <Weather>
          <svg width="26" height="26" viewBox="0 0 26 26">
            <defs><linearGradient id="moon" x1="1" x2="0" y2="1"><stop stopColor="#f7bd4e" /><stop offset="1" stopColor="#ed8220" /></linearGradient></defs>
            <path d="M20 5c5 5 4 11 0 14.500-6 4-14 2-18-6.500 8 3 16 0 18-8z" fill="url(#moon)" />
          </svg>
          <WeatherBadge>9+</WeatherBadge>
        </Weather>
        <Apps>
          {apps.map((a, i) => <AppSlot key={i} $run={a.run} $active={a.active}>{a.icon}{a.badge}</AppSlot>)}
        </Apps>
        <Tray>
          <TrayCell $w={36}><svg width="12" height="8" viewBox="0 0 12 8" fill="none" stroke="#fff" strokeWidth="1.500"><path d="M1 6.500l5-5 5 5" /></svg></TrayCell>
          <TrayCell $w={40}>ENG<br />IN</TrayCell>
          <TrayCell $w={36}>
            <svg width="16" height="14" viewBox="0 0 16 14" fill="none" stroke="#fff" strokeWidth="1.200"><path d="M.8 5.200a10.200 10.200 0 0 1 14.400 0M3 7.500a7.100 7.100 0 0 1 10 0M5.200 9.700a4 4 0 0 1 5.600 0" /><circle cx="8" cy="11.800" r="1.200" fill="#fff" stroke="none" /></svg>
          </TrayCell>
          <TrayCell $w={14}>
            <svg width="18" height="16" viewBox="0 0 18 16" fill="none" stroke="#fff" strokeWidth="1.100"><path d="M1.500 5.500h2.500L8 2v12l-4-3.500H1.500zM10.500 5.500q1.600 2.500 0 5M12.700 3.700q2.900 4.300 0 8.600M14.800 2q4 6 0 12" /></svg>
          </TrayCell>
          <Clock>20:59<br />11-10-2025</Clock>
        </Tray>
      </Taskbar>

      <Recorder>
        <svg width="12" height="12" viewBox="0 0 12 12"><circle cx="6" cy="6" r="5" fill="none" stroke="#c84a4a" /><circle cx="6" cy="6" r="3.800" fill="#fb0808" /></svg>
        <RecorderText>screen<RecorderStrong>rec</RecorderStrong></RecorderText>
      </Recorder>
      <Toast>
        <ToastTitle>Error</ToastTitle>
        <ToastText>{`Unexpected token '<', "<!DOCTYPE "... is not valid JSON`}</ToastText>
      </Toast>
    </Screen>
  );
}
